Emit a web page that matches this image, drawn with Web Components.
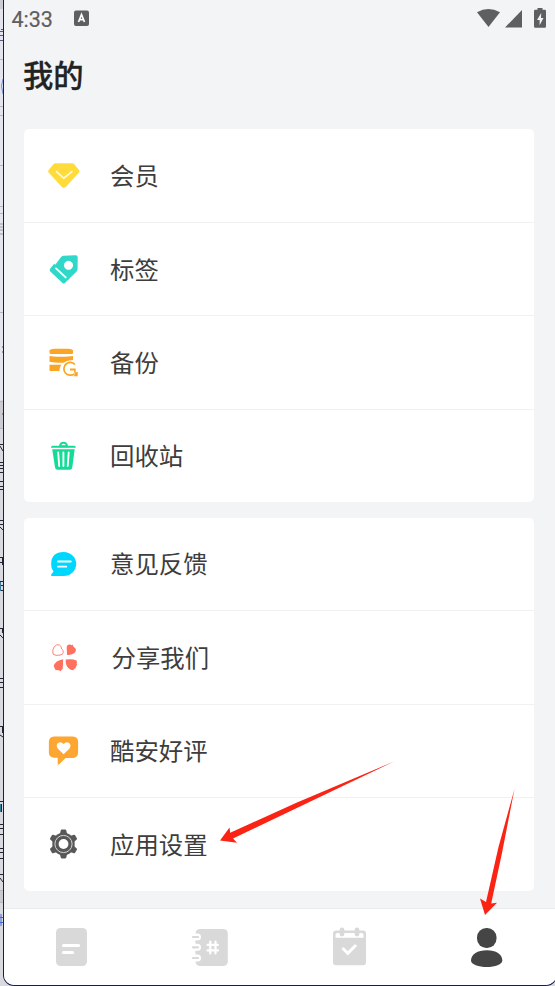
<!DOCTYPE html>
<html lang="zh-CN">
<head>
<meta charset="utf-8">
<title>我的</title>
<style>
html,body{margin:0;height:100%;overflow:hidden;background:#d9dadf}
body{font-family:Roboto,"Noto Sans CJK SC",sans-serif;position:relative}
</style>
</head>
<body>
<desktop-edge></desktop-edge>
<phone-window>
  <status-bar></status-bar>
  <page-title>我的</page-title>
  <menu-card style="--icon-y:0px;--text-y:-1px;--rows:94px 93px 94px 1fr">
    <menu-row icon="vip">会员</menu-row>
    <menu-row icon="tag" style="--icon-y:.5px;--text-y:-.5px">标签</menu-row>
    <menu-row icon="backup">备份</menu-row>
    <menu-row icon="trash" style="--icon-y:.5px">回收站</menu-row>
  </menu-card>
  <menu-card style="--text-y:-1px;--rows:93px 94px 93px 1fr">
    <menu-row icon="chat">意见反馈</menu-row>
    <menu-row icon="share" style="--shift:1.5px;--text-y:-1.500px;--icon-y:-.7px">分享我们</menu-row>
    <menu-row icon="rate" style="--icon-y:-.5px">酷安好评</menu-row>
    <menu-row icon="gear" style="--icon-y:-1px">应用设置</menu-row>
  </menu-card>
  <tab-bar slot="bottom"></tab-bar>
</phone-window>
<red-arrows></red-arrows>
<script>
const define = (name, html, setup) => customElements.define(name, class extends HTMLElement {
  constructor() {
    super();
    this.attachShadow({ mode: 'open' }).innerHTML = html;
  }
  connectedCallback() { if (setup) setup(this); }
});

const TOOTH = 'M15.800 8.500l.9-3.900h3.600l.9 3.900z';
const teeth = [0, 60, 120, 180, 240, 300].map(a => `<path d="${TOOTH}" transform="rotate(${a} 18.500 18)"/>`).join('');

// Row icons, each on a 36x36 box.
const ICONS = {
  vip: `<path d="M10.3 5.200h17q1 0 1.700.7l5 6q1 1.300 0 2.500L21 28.800q-2.200 2.200-4.400 0L3.600 14.400q-1-1.200 0-2.500l5-6q.7-.7 1.700-.7z" fill="#ffdc3c"/><path d="M11.500 13.600l7.300 6.600 8.200-6.600" fill="none" stroke="#fffbe2" stroke-width="1.500" stroke-linecap="round"/>`,
  tag: `<path fill-rule="evenodd" d="M18.500 4.300L30.500 3.700q2.200-.1 2.200 2L32.600 17.500q0 1.400-1 2.400L23.200 28.200 9.200 14.800 15.500 6.200q1.400-1.800 3-1.900zM23.500 9.300a4.500 4.500 0 1 0 .01 0z" fill="#2fd8c8"/><path d="M9.200 12.300L24.500 27 20.200 31.300q-1.300 1.300-2.700.1L5.300 20q-1.300-1.300-.2-2.800z" fill="#2fd8c8"/><path d="M11 16.900l9.700 9" stroke="#fff" stroke-width="1.900" stroke-linecap="round"/>`,
  backup: `<g fill="#faa523"><path d="M4.500 7.800V5.600Q5.500 3.800 10 3.700h13q4 .1 5 1.900v2.500q0 1-1.500 1H6q-1.500 0-1.500-1.300z"/><path d="M4.500 11q3 .7 11.500.7t12-.7v4q-4 .3-7.500 2.500-8 .8-16-.7z"/><path d="M4.500 19.800h12q-2.200 2.300-2.300 6.200H5.500q-1 0-1-1z"/></g><circle cx="25" cy="23.700" r="8.300" fill="#fff"/><path d="M30 19.500a6.400 6.400 0 1 0-.7 9.300" fill="none" stroke="#faa523" stroke-width="1.700"/><path d="M25 23.600h5.700v4l2-1v4.600h-4.500l1.600-1.400-.8-4.300h-4z" fill="#faa523"/>`,
  trash: `<path d="M14.800 7.200a3.300 2.800 0 0 1 6.600 0v.8h-6.600z" transform="translate(.4 -.2)" fill="none" stroke="#14dc96" stroke-width="2"/><path d="M7.500 7.300h22q1.300 0 1.300 2H6q0-2 1.500-2zM7.200 10.700h22.500L27.300 28.800q-.3 2.500-2.500 2.500H12.500q-2.200 0-2.500-2.500z" fill="#14dc96"/><path d="M13.200 14l1 13.500M18.400 14v13.500M23.700 14l-1 13.500" stroke="#fff" stroke-width="1.900" stroke-linecap="round"/>`,
  chat: `<path d="M18.700 6a12.500 12 0 1 1 0 24H7.200q-2-.2-.8-1.700l2.100-2.800Q5.900 22.400 6.100 18 6.300 6 18.700 6z" fill="#00d7ff"/><path d="M13 15.500h12.800M13 20.700h8.200" stroke="#fff" stroke-width="1.800" stroke-linecap="round"/>`,
  share: `<path d="M8 14.800q-1-4.500 1.300-7.600Q11.500 4.800 14.300 5.600q2 .7 2.300 4.100 1.800.8 1.700 3.400-.2 2.500-3.300 2.700-4.400 1-7-1z" fill="none" stroke="#ff8576" stroke-width="1"/><path d="M22 15.600l-.3-7.600q.3-2.900 3.300-2.700l1.700.6.800-.8 1 2.300 2 1.900q1.300 2-1.100 4.300-3.400 2.500-7.400 2z" fill="#ff705f"/><path d="M18.200 19.900l-.5 9.900-1.300.8-.8 1.400-1.600-1-3.500-.2-1.200-2.500-.6-1.500q1.500-5.700 9.500-6.900z" fill="#ff705f"/><path d="M20.700 20.300q6-1.100 10.800.8l.5 2-.5 1.100.6.800-1.500 3.600-1.500 1-.8 1.300-2.600-.5q-5.600-2.500-5-10.100z" fill="#ff705f"/>`,
  rate: `<path d="M9 4h19q5 .3 5.100 5v11q0 5-5.100 5.400h-7.400l-6.400 6.400q-1.500 1.200-1.500-.8v-5.800H9q-5-.2-5.100-5.200V9Q4 4.300 9 4z" fill="#fda631"/><path d="M18.600 21.700l-5.700-5.500q-2.500-3.400.1-5.600 3-2 5.600.8 2.600-2.800 5.600-.8 2.600 2.200.1 5.600z" fill="#fff"/>`,
  gear: `<g fill="#585858"><circle cx="18.500" cy="18" r="11.200"/><g stroke="#585858" stroke-width="2" stroke-linejoin="round">${teeth}</g></g><circle cx="18.500" cy="18" r="8.600" fill="none" stroke="#d4d4d4" stroke-width="1"/><circle cx="18.500" cy="18" r="4.900" fill="#fff"/>`
};

// Strip of the desktop visible left of the window.
define('desktop-edge', `<style>:host{position:absolute;inset:0}svg{display:block}</style>
<svg width="555" height="986" viewBox="0 0 555 986">
<path d="M0 0h12v400H0z" fill="#e3e4ee"/><path d="M0 0h4v9H0z" fill="#ccccd4"/><path d="M0 401h4v28H0z" fill="#cbcbd1"/><path d="M0 891h4v12H0z" fill="#cacace"/>
<path d="M0 59.500h3M0 106.500h3M0 115.500h3M0 165.500h3M0 206.500h3M0 213.500h3M0 312.500h3M0 401.500h3M0 428.500h3M0 890.500h3M0 902.500h3" stroke="#b7b7c4"/>
<path d="M1 29.500h2M0 31.500h3M0 35.500h3M0 40.500h3" stroke="#555a75"/>
<path d="M3 79q-3 7 0 15" stroke="#7590d5" fill="none"/><path d="M0 224h3M0 227h3M0 230h3M0 234h3" stroke="#9c9ca6"/>
<path d="M2 347h1M2 352h1M2 414h1" stroke="#555"/>
<g stroke="#242432" fill="none"><path d="M0 444.500h3M0 446l3 5M0 462.500h3M0 465.500h3M0 468.500h3M0 472.500h3M0 481.500h3M0 486.500h3M0 489.500h3M0 520.500h3M0 524.500h3M0 527l3 3M0 557.500h3M2.500 557v8M0 562.500h2M0 581.500h3M0 585.500h3M0 590.500h3M0 628.500h3M2.500 628v5M0 635l3 3M0 678.500h3M0 682.500h3M0 687.500h3M0 726.500h3M2.500 726v7M0 735l3 2M0 801.500h3M1.500 804v8M0 824.500h3M0 828.500h3M0 834.500h3M0 848.500h3M0 852.500h3M0 858.500h3M0 874.500h3M0 878l3 4"/></g>
<path d="M.5 582v9M.5 804v8" stroke="#3d7c98"/><path d="M1 914v12M0 917.500h3M0 922.500h3" stroke="#4668d4"/>
</svg>`);

define('phone-window', `<style>
:host{box-sizing:border-box;position:absolute;left:3px;top:0;width:554px;height:986px;display:flex;flex-direction:column;background:#f2f4f6;border:1px solid #1b1e49;border-top:0;border-radius:0 0 11px 11px;overflow:hidden}
main{flex:1;display:flex;flex-direction:column;padding:0 22px 0 19.500px}
</style><main><slot></slot></main><slot name="bottom"></slot>`);

define('status-bar', `<style>
:host{display:flex;height:38px;align-items:center;margin:0 -18px 0 -12px;color:#5e5f61;font:400 21.500px Roboto,sans-serif}
span{width:61.500px;padding-top:1px;-webkit-text-stroke:.2px #5e5f61}.sp{flex:1}svg{display:block}
</style><span>4:33</span>
<svg width="17" height="38"><rect x="1" y="10.500" width="15" height="15.500" rx="2" fill="#5e5f61"/><path d="M5.500 22l3-7.500 3 7.500M6.500 19.700h4" fill="none" stroke="#fff" stroke-width="1.700"/></svg>
<i class="sp"></i>
<svg width="77" height="38" viewBox="475 0 77 38"><g fill="#5e5f61"><path d="M477 12.300q11.300-6.600 23 0L488.500 27z"/><path d="M505 27.500h17V10z"/><path d="M537.500 8h5v1.800h2.300q1.200 0 1.200 1.200v15.200q0 1.500-1.200 1.500h-9.600q-1.200 0-1.200-1.500V11q0-1.200 1.200-1.200h2.300z"/></g><path d="M541.200 13l-4.200 7h2.600v5.200l3.900-7.200H541z" fill="#f2f4f6"/></svg>`);

define('page-title', `<style>
:host{display:block;height:91px;box-sizing:border-box;padding-top:12px;margin-left:-.5px;font:500 30.300px/48px "Noto Sans CJK SC",sans-serif;color:#222;-webkit-text-stroke:.3px #222}
</style><slot></slot>`);

define('menu-card', `<style>
:host{display:grid;grid-template-rows:var(--rows);background:#fff;border-radius:5px;margin-bottom:16px;height:373px;overflow:hidden}
::slotted(:not(:last-child)){border-bottom:1px solid #f0f1f2}
</style><slot></slot>`);

define('menu-row', `<style>
:host{box-sizing:border-box;display:flex;align-items:center;padding-left:21.500px;font:400 24.400px/36px "Noto Sans CJK SC",sans-serif;color:#3d3d3d}
svg{width:36px;height:36px;margin-right:29px;flex:none;transform:translateY(var(--icon-y,0))}
span{padding-left:var(--shift,0);transform:translateY(var(--text-y,0))}
</style><svg viewBox="0 0 36 36"></svg><span><slot></slot></span>`,
  el => { el.shadowRoot.querySelector('svg').innerHTML = ICONS[el.getAttribute('icon')]; });

define('tab-bar', `<style>
:host{display:grid;grid-template-columns:134px 141px 139px 138px;height:77px;box-sizing:border-box;border-top:1px solid #e9eaec;background:#fff}
svg{width:44px;height:44px;justify-self:center;margin-top:16px}
</style>
<svg viewBox="49 925 44 44"><rect x="56" y="928" width="31" height="38" rx="4.500" fill="#d9d9d9"/><path d="M63.500 945.500h15M63.500 952.500h9" stroke="#fff" stroke-width="3.200" stroke-linecap="round"/></svg>
<svg viewBox="187 925 44 44"><rect x="195.500" y="929" width="32.300" height="37" rx="4.500" fill="#d9d9d9"/><g stroke="#fff" stroke-width="7" stroke-linecap="round"><path d="M192 937h5.500M192 947.300h5.500M192 958h5.500"/></g><g stroke="#d9d9d9" stroke-width="2.200" stroke-linecap="round"><path d="M193 937h5M193 947.300h5M193 958h5"/></g><path d="M195.500 941.500h4M195.500 952h4" stroke="#d9d9d9" stroke-width="1.500"/><path d="M210.300 941.500v12M215.500 941.500v12M207.500 944.800h10.500M207.500 950.400h10.500" stroke="#fff" stroke-width="2.200" stroke-linecap="round"/></svg>
<svg viewBox="326 925 44 44"><rect x="332" y="930.500" width="33" height="34.800" rx="3" fill="#d9d9d9"/><path d="M336.500 933h24q2 0 2 2v2.800h-28V935q0-2 2-2z" fill="#fff"/><path d="M341 930v4M356 930v4" stroke="#d9d9d9" stroke-width="4.800" stroke-linecap="round"/><path d="M342.500 949l4.300 4.300 7.200-7.300" fill="none" stroke="#fff" stroke-width="3" stroke-linecap="square"/></svg>
<svg viewBox="465 925 44 44"><rect x="477" y="928" width="19.500" height="20" rx="9.300" fill="#454545"/><path d="M486.800 950.300c9.200 0 15.500 4 15.500 10.200 0 4-7.300 6.500-15.500 6.500s-15.800-2.500-15.800-6.500c0-6.200 6.600-10.200 15.800-10.200z" fill="#454545"/></svg>`);

define('red-arrows', `<style>:host{position:absolute;inset:0;pointer-events:none}svg{display:block}</style>
<svg width="555" height="986" viewBox="0 0 555 986"><g fill="#fb2314">
<path d="M220 840.500L229.500 827.500l.7 5.300L297 802.500 394 761.500 300 806.500 233 838.500l4 4.200z"/>
<path d="M485 915L480 898.500l6 3.500L498.500 847 514.500 789 502 853 491.200 903.500l5.800-.8z"/></g></svg>`);
</script>
</body>
</html>
